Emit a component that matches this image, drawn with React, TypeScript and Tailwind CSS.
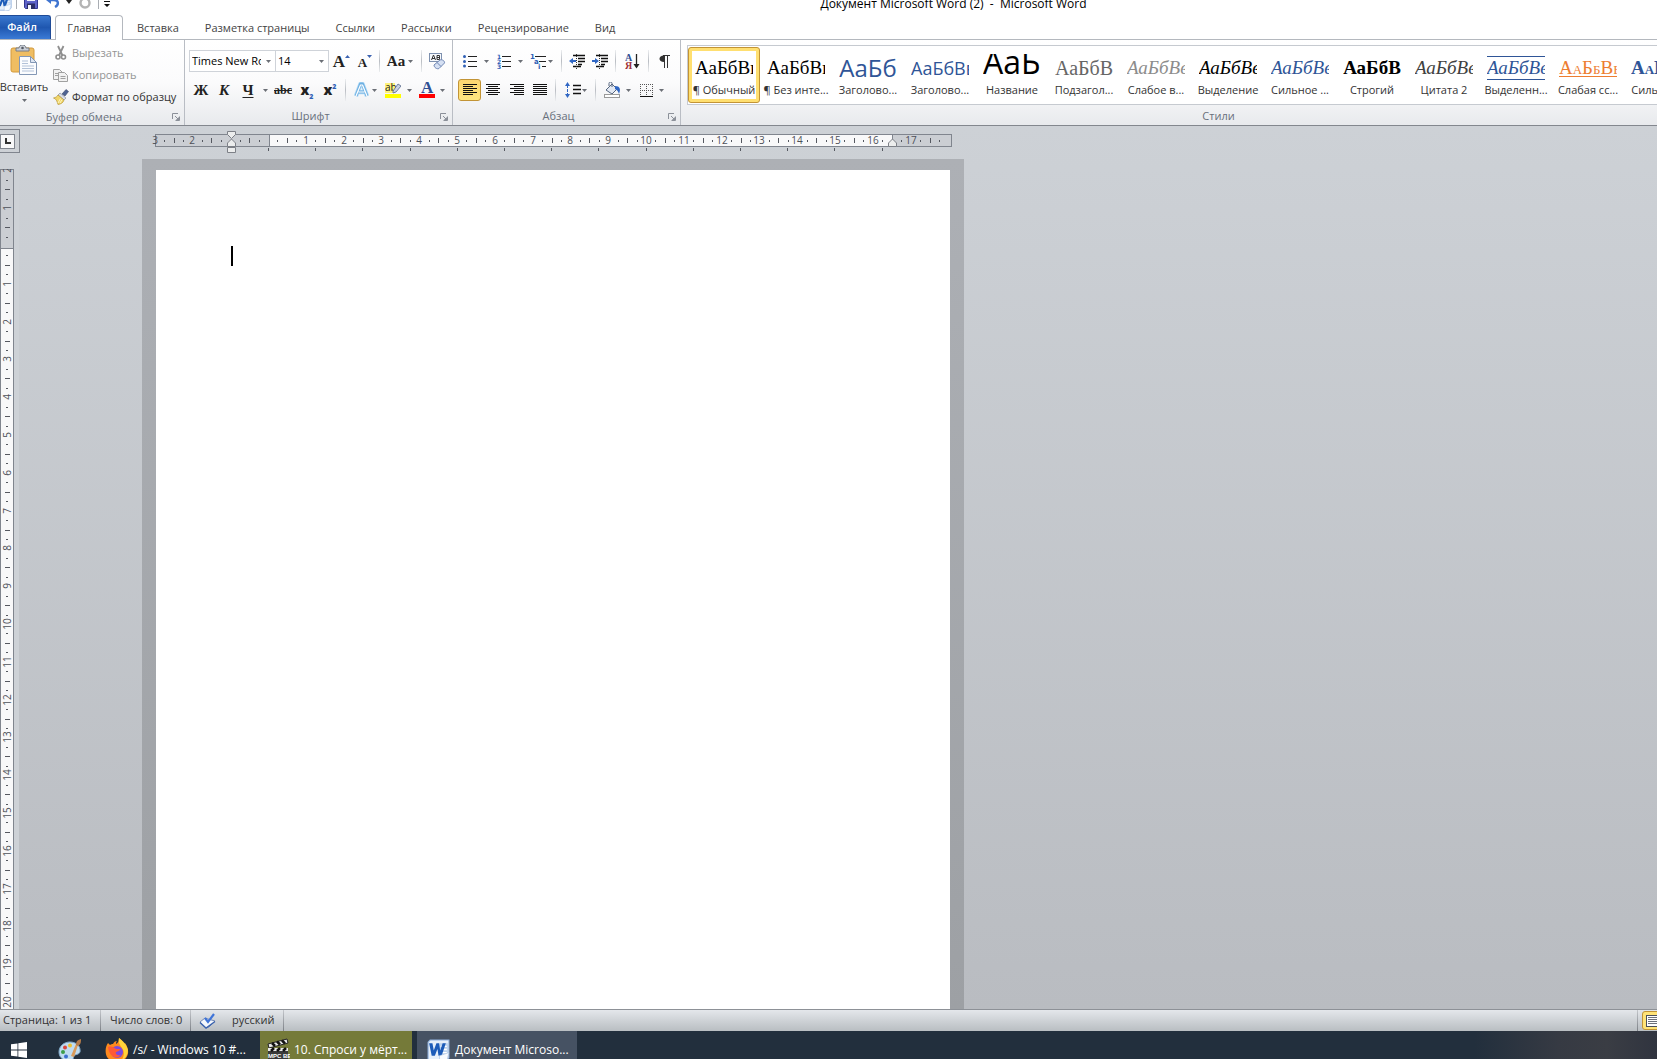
import type { ReactNode } from "react"
import { clsx } from "clsx"

const CM = 37.8

const tabs = ["Вставка", "Разметка страницы", "Ссылки", "Рассылки", "Рецензирование", "Вид"]

const serif = "font-['Liberation_Serif',serif] leading-[22px]"
const sans = "font-['Open_Sans',sans-serif] leading-[22px]"

const styles = [
  { name: "¶ Обычный", sample: "АаБбВв", font: serif, look: "text-[19px] text-black" },
  { name: "¶ Без инте...", sample: "АаБбВв", font: serif, look: "text-[19px] text-black" },
  { name: "Заголово...", sample: "АаБб", font: sans, look: "text-[24px] text-[#2f5597]" },
  { name: "Заголово...", sample: "АаБбВв", font: sans, look: "text-[18px] text-[#2f5597]" },
  {
    name: "Название",
    sample: "АаБбВ",
    font: "font-['Open_Sans',sans-serif] leading-[16px]",
    look: "self-start text-[32px] text-black",
  },
  { name: "Подзагол...", sample: "АаБбВ", font: serif, look: "text-[20px] text-[#666666]" },
  { name: "Слабое в...", sample: "АаБбВв", font: serif, look: "text-[19px] italic text-[#8c8c8c]" },
  { name: "Выделение", sample: "АаБбВв", font: serif, look: "text-[19px] italic text-black" },
  { name: "Сильное ...", sample: "АаБбВв", font: serif, look: "text-[19px] italic text-[#2f5597]" },
  { name: "Строгий", sample: "АаБбВ", font: serif, look: "text-[19px] font-bold text-black" },
  { name: "Цитата 2", sample: "АаБбВв", font: serif, look: "text-[19px] italic text-[#404040]" },
  { name: "Выделенн...", sample: "АаБбВв", font: serif, look: "text-[19px] italic text-[#2f5597] border-y border-[#2f5597]" },
  { name: "Слабая сс...", sample: "АаБбВв", font: serif, look: "text-[19px] text-[#ed7d31] underline underline-offset-2 [font-variant:small-caps]" },
  { name: "Сильная ...", sample: "АаБбВв", font: serif, look: "text-[19px] font-bold text-[#2f5597] [font-variant:small-caps]" },
]

const Caret = () => (
  <svg width="5" height="3" className="shrink-0">
    <path d="M0 0h5L2.500 3z" fill="#6b6f76" />
  </svg>
)

const Separator = ({ className }: { className: string }) => (
  <span className={clsx("flex justify-center self-stretch", className)}>
    <span className="w-px bg-gradient-to-b from-[#eceef0] via-[#b9bdc3] to-[#eceef0]" />
  </span>
)

type ToolProps = { label: string; className: string; children: ReactNode; active?: boolean }

const Tool = ({ label, className, children, active }: ToolProps) => (
  <button
    type="button"
    aria-label={label}
    title={label}
    className={clsx(
      "flex h-[22px] shrink-0 items-center justify-center leading-none",
      className,
      active && "rounded-[3px] border border-[#c29436] bg-gradient-to-b from-[#fcd671] to-[#ffe680]",
    )}
  >
    {children}
  </button>
)

const Launcher = ({ label }: { label: string }) => (
  <button type="button" aria-label={label} className="flex h-4 w-4 items-center justify-center">
    <svg width="8" height="8" fill="none" stroke="#8b9099">
      <path d="M.5 6V.5H6M3 3l3 3M7.500 3.500v4h-4" />
      <path d="M7 4.500v2.500H4.500z" fill="#8b9099" />
    </svg>
  </button>
)

type GroupProps = { title: string; className: string; children: ReactNode; launcher?: boolean }

const Group = ({ title, className, children, launcher = true }: GroupProps) => (
  <section
    aria-label={title}
    className={clsx("flex h-full shrink-0 flex-col border-r border-[#b9bdc4]", className)}
  >
    <div className="h-[68px]">{children}</div>
    <div className="flex h-[18px] items-center pt-px">
      <span className="flex-1 text-center text-[#69707c]">{title}</span>
      {launcher && <Launcher label={`Параметры: ${title}`} />}
    </div>
  </section>
)

const Select = ({ label, value, className }: { label: string; value: string; className: string }) => (
  <label className={clsx("flex h-[22px] shrink-0 items-center border border-[#cfd3d9] bg-white", className)}>
    <span className="sr-only">{label}</span>
    <select
      defaultValue={value}
      className="w-0 flex-1 appearance-none overflow-hidden bg-transparent pl-[2px] text-black outline-none"
    >
      <option>{value}</option>
    </select>
    <span className="flex w-[14px] justify-center">
      <Caret />
    </span>
  </label>
)

const WordIcon = ({ size }: { size: number }) => (
  <svg width={size} height={size} viewBox="0 0 22 22" className="shrink-0">
    <path d="M3 1h18v17l-3 3H1V3z" fill="#e6effa" stroke="#8fb0dc" />
    <path d="M12 4h8v13h-8z" fill="#bcd3ef" />
    <path d="M13 7h6M13 10h6M13 13h6" stroke="#fff" strokeWidth="1.300" />
    <path d="M2 4h3.200l1.300 7L9 4h2.600l1 7L15 4h3l-4 12h-3l-1-6.500L7.500 16h-3z" fill="#1c5bb8" />
    <path d="M12 16l9-3-2 8-7 1z" fill="#f7fafe" stroke="#a8c0e0" strokeWidth=".6" />
  </svg>
)

const QuickAccess = () => (
  <div className="flex h-[22px] w-[115px] shrink-0 items-center overflow-hidden">
    <span className="-ml-[5px] flex w-[17px]"><WordIcon size={17} /></span>
    <span className="ml-[4px] h-[14px] w-px bg-[#a9adb3]" />
    <button type="button" aria-label="Сохранить" className="ml-[7px]">
      <svg width="14" height="14" viewBox="0 0 14 14">
        <path d="M.5.5h13v13h-12l-1-1z" fill="#5d62c8" stroke="#31358f" />
        <path d="M3 0h8v6H3z" fill="#eef1fb" />
        <path d="M3 8.500h8V14H3z" fill="#2a2d66" />
        <path d="M4 10h3v4H4z" fill="#f3f4fa" />
      </svg>
    </button>
    <button type="button" aria-label="Отменить" className="ml-[8px] flex items-center gap-[6px]">
      <svg width="14" height="14" viewBox="0 0 14 14" fill="none">
        <path d="M3 5h5c5 0 5 5 1 7" stroke="#3f74d0" strokeWidth="2.400" />
        <path d="M0 5l5-4v8z" fill="#3f74d0" />
      </svg>
      <svg width="6" height="4"><path d="M0 0h6L3 4z" fill="#222" /></svg>
    </button>
    <button type="button" aria-label="Повторить" className="ml-[6px]">
      <svg width="14" height="14" viewBox="0 0 14 14" fill="none">
        <circle cx="7" cy="8" r="4.500" stroke="#b4b4b4" strokeWidth="2.400" />
        <path d="M7 2l5 0v5z" fill="#b4b4b4" />
      </svg>
    </button>
    <span className="ml-[6px] h-[14px] w-px bg-[#a9adb3]" />
    <button type="button" aria-label="Настройка панели быстрого доступа" className="ml-[5px] pt-[3px]">
      <svg width="6" height="6"><path d="M0 0h6v1H0zM0 3h6L3 6z" fill="#111" /></svg>
    </button>
  </div>
)

const PasteIcon = () => (
  <svg width="28" height="31" viewBox="0 0 28 31">
    <rect x="1" y="3" width="23" height="24" rx="2" fill="#efbd62" stroke="#d39a3c" />
    <path d="M6 6V3h3c0-4 7-4 7 0h3v3z" fill="#c9ced6" stroke="#767d88" />
    <circle cx="12.500" cy="3" r="1.300" fill="#555c66" />
    <path d="M9.500 11.500h11l6 6v12h-17z" fill="#fbfcfe" stroke="#8397b5" />
    <path d="M20.500 11.500v6h6z" fill="#dce5f2" stroke="#8397b5" />
    <path d="M12 16h6M12 18.500h6M12 21h12M12 23.500h12M12 26h12" stroke="#b3c2d8" />
  </svg>
)

const clipRow = "flex h-[22px] items-center whitespace-nowrap"

const Clipboard = () => (
  <Group title="Буфер обмена" className="w-[185px]">
    <div className="flex">
      <button type="button" className="flex w-[48px] shrink-0 flex-col items-center pt-[5px] text-[#333]">
        <PasteIcon />
        <span className="mt-[2px] leading-[18px]">Вставить</span>
        <span className="flex h-[8px] items-center"><Caret /></span>
      </button>
      <div className="flex flex-col pt-[2px] pl-[5px]">
        <button type="button" disabled className={clsx(clipRow, "gap-[3px] text-[#949494]")}>
          <svg width="16" height="16" viewBox="0 0 16 16" fill="none" stroke="#8f8f8f">
            <path d="M5 1l4.500 9.500M10.500 1L6 10.500" strokeWidth="1.800" />
            <circle cx="5" cy="12" r="2" strokeWidth="1.600" />
            <circle cx="10.500" cy="12" r="2" strokeWidth="1.600" />
          </svg>
          Вырезать
        </button>
        <button type="button" disabled className={clsx(clipRow, "gap-[3px] text-[#949494]")}>
          <svg width="16" height="16" viewBox="0 0 16 16" fill="#f2f2f2" stroke="#a0a0a0">
            <path d="M.5 2.500h6l3 3v7h-9z" />
            <path d="M5.500 5.500h6l3 3v6h-9z" />
            <path d="M2 6.500h3M2 8.500h3M7.500 9.500h5M7.500 11.500h5" />
          </svg>
          Копировать
        </button>
        <button type="button" className={clsx(clipRow, "gap-[3px] text-[#333]")}>
          <svg width="16" height="16" viewBox="0 0 16 16">
            <path d="M9 5l4-4.500 2.500 2L12 7z" fill="#4e6392" stroke="#39466b" strokeWidth=".6" />
            <path d="M7 4l6 5-2 2-6-5z" fill="#d9dde6" stroke="#7d8596" strokeWidth=".6" />
            <path d="M5 6l6 5c-1 3-3 4-6 4.500C4 12 3 9.500.5 9 3 8.500 4 7.500 5 6z" fill="#f1d66a" stroke="#b6963a" strokeWidth=".7" />
            <path d="M5 14l2.500-4.500M7 14l2-3.500" stroke="#fff6c2" />
          </svg>
          Формат по образцу
        </button>
      </div>
    </div>
  </Group>
)

const serifTool = "font-['Liberation_Serif',serif] font-bold text-[#222]"

const FontGroup = () => (
  <Group title="Шрифт" className="w-[268px]">
    <div className="flex flex-col gap-[7px] pt-[10px] pl-[4px]">
      <div className="flex items-center">
        <Select label="Шрифт" value="Times New Roman" className="w-[87px]" />
        <Select label="Размер шрифта" value="14" className="-ml-px w-[54px]" />
        <Tool label="Увеличить размер" className={clsx("w-[25px] text-[17px]", serifTool)}>
          A<svg width="5" height="14"><path d="M0 4h5L2.500 1z" fill="#3b62b0" /></svg>
        </Tool>
        <Tool label="Уменьшить размер" className={clsx("w-[22px] pt-[2px] text-[13px]", serifTool)}>
          A<svg width="5" height="16"><path d="M0 1h5L2.500 4z" fill="#3b62b0" /></svg>
        </Tool>
        <Separator className="w-[7px]" />
        <Tool label="Регистр" className={clsx("w-[34px] gap-[3px] text-[15px]", serifTool)}>
          Aa
          <Caret />
        </Tool>
        <Separator className="w-[8px]" />
        <Tool label="Очистить формат" className="w-[24px]">
          <svg width="17" height="17" viewBox="0 0 17 17" fill="none">
            <rect x=".5" y=".5" width="12" height="8" fill="#f5f8fc" stroke="#7d90ae" />
            <path d="M2.500 7l2-5 2 5M3 5.500h3M8 2.500h2.500v4H8zM8 4.500h2" stroke="#333" />
            <path d="M5 12l6-5c2-1 5 1 4.500 3L10 15.500c-2 1-5-1-5-3.500z" fill="#d5e0f3" stroke="#6f86b3" />
            <path d="M8 9.500l4 4" stroke="#6f86b3" />
          </svg>
        </Tool>
      </div>
      <div className="flex items-center">
        <Tool label="Полужирный" className={clsx("w-[24px] text-[15px]", serifTool)}>Ж</Tool>
        <Tool label="Курсив" className={clsx("w-[22px] text-[15px] italic", serifTool)}>К</Tool>
        <Tool label="Подчеркнутый" className={clsx("w-[35px] gap-[9px] pl-[5px] text-[15px]", serifTool)}>
          <span className="underline underline-offset-2">Ч</span>
          <Caret />
        </Tool>
        <Tool label="Зачеркнутый" className={clsx("w-[26px] text-[12px] line-through", serifTool)}>abc</Tool>
        <Tool label="Подстрочный знак" className="w-[22px] text-[14px] font-extrabold text-[#222]">
          x<span className="self-end pb-px text-[7px] text-[#2f5fb5]">2</span>
        </Tool>
        <Tool label="Надстрочный знак" className="w-[24px] text-[14px] font-extrabold text-[#222]">
          x<span className="self-start pt-[4px] text-[7px] text-[#2f5fb5]">2</span>
        </Tool>
        <Separator className="w-[7px]" />
        <Tool label="Текстовые эффекты" className="w-[33px] gap-[3px]">
          <svg width="15" height="16" viewBox="0 0 15 16" fill="none" strokeLinejoin="round">
            <path d="M2 14L6.500 2h2L13 14M4 10h7" stroke="#b5dbf6" strokeWidth="4.500" />
            <path d="M2 14L6.500 2h2L13 14M4.500 10h6" stroke="#6eb0e2" strokeWidth="3" />
            <path d="M2 14L6.500 3h2L13 14M4.500 10h6" stroke="#fff" strokeWidth="1.200" />
          </svg>
          <Caret />
        </Tool>
        <Tool label="Цвет выделения текста" className="w-[33px] gap-[6px]">
          <svg width="16" height="16" viewBox="0 0 16 16">
            <rect width="10" height="10" y="1" fill="#fff27a" />
            <text x="0" y="9" fontSize="10" fontFamily="Open Sans" fill="#222">ab</text>
            <path d="M8 9l5-7 3 2-5 6-3 1z" fill="#c8d2e4" stroke="#596a8c" strokeWidth=".8" />
            <rect y="12" width="16" height="4" fill="#ffff00" />
          </svg>
          <Caret />
        </Tool>
        <Tool label="Цвет текста" className="w-[34px] gap-[5px]">
          <svg width="16" height="16" viewBox="0 0 16 16">
            <text x="2" y="11" fontSize="17" fontWeight="bold" fontFamily="Liberation Serif" fill="#2f4f93">A</text>
            <rect y="12" width="16" height="4" fill="#ff0000" />
          </svg>
          <Caret />
        </Tool>
      </div>
    </div>
  </Group>
)

const Lines = ({ d }: { d: string }) => (
  <svg width="14" height="12" viewBox="0 0 14 12" shapeRendering="crispEdges">
    <path d={d} stroke="#111" />
  </svg>
)

const IndentIcon = ({ out }: { out?: boolean }) => (
  <svg width="17" height="15" viewBox="0 0 17 15">
    <path d="M4 1.500h12M9 4.500h7M9 7.500h7M9 10.500h4M4 12.500h8" stroke="#111" strokeWidth="1.400" />
    <path d="M7.500 0v15" stroke="#333" strokeDasharray="1 1" />
    <path d={out ? "M0 7l4-3v2h3v2H4v2z" : "M7 7L3 4v2H0v2h3v2z"} fill="#2f66c4" />
  </svg>
)

const Paragraph = () => (
  <Group title="Абзац" className="w-[228px]">
    <div className="flex flex-col gap-[7px] pt-[10px] pl-[5px]">
      <div className="flex items-center">
        <Tool label="Маркеры" className="w-[35px] gap-[7px]">
          <svg width="14" height="14" viewBox="0 0 14 14">
            <path d="M5 2.500h9M5 7.500h9M5 12.500h9" stroke="#222" />
            <circle cx="1.500" cy="2.500" r="1.500" fill="#2f5fb5" />
            <circle cx="1.500" cy="7.500" r="1.500" fill="#2f5fb5" />
            <circle cx="1.500" cy="12" r="1.500" fill="#2f5fb5" />
          </svg>
          <Caret />
        </Tool>
        <Tool label="Нумерация" className="w-[34px] gap-[7px]">
          <svg width="14" height="15" viewBox="0 0 14 15">
            <path d="M5 2.500h9M5 7.500h9M5 12.500h9" stroke="#222" />
            <g fill="#2f5fb5" fontSize="6" fontWeight="bold" fontFamily="DejaVu Sans">
              <text y="5">1</text><text y="10">2</text><text y="15">3</text>
            </g>
          </svg>
          <Caret />
        </Tool>
        <Tool label="Многоуровневый список" className="w-[29px] gap-[2px]">
          <svg width="16" height="15" viewBox="0 0 16 15">
            <path d="M5 2.500h11M9 7.500h7M12 12.500h4" stroke="#222" />
            <g fill="#2f5fb5" fontSize="7" fontWeight="bold" fontFamily="DejaVu Sans">
              <text y="5">1</text><text x="4" y="10">a</text><text x="8" y="15">i</text>
            </g>
          </svg>
          <Caret />
        </Tool>
        <Separator className="w-[10px]" />
        <Tool label="Уменьшить отступ" className="w-[23px]"><IndentIcon out /></Tool>
        <Tool label="Увеличить отступ" className="w-[22px]"><IndentIcon /></Tool>
        <Separator className="w-[9px]" />
        <Tool label="Сортировка" className="w-[24px]">
          <svg width="15" height="17" viewBox="0 0 15 17">
            <g fontSize="10" fontWeight="bold" fontFamily="Liberation Serif">
              <text y="8" fill="#2f4f93">А</text><text y="16" fill="#a03038">Я</text>
            </g>
            <path d="M11.500 1v13" stroke="#222" strokeWidth="1.300" />
            <path d="M8.500 11h6l-3 4.500z" fill="#222" />
          </svg>
        </Tool>
        <Separator className="w-[9px]" />
        <Tool label="Отобразить все знаки" className="w-[22px]">
          <svg width="11" height="13" viewBox="0 0 11 13" fill="none">
            <path d="M5 7C-1 7-1 .5 5 .5z" fill="#333" />
            <path d="M4 .5h7M5.500 0v13M8.500 0v13" stroke="#333" />
          </svg>
        </Tool>
      </div>
      <div className="flex items-center">
        <Tool label="По левому краю" className="w-[23px]" active>
          <Lines d="M0 .5h14M0 2.500h10M0 4.500h14M0 6.500h10M0 8.500h14M0 10.500h10" />
        </Tool>
        <Tool label="По центру" className="w-[24px]">
          <Lines d="M0 .5h14M2 2.500h10M0 4.500h14M2 6.500h10M0 8.500h14M2 10.500h10" />
        </Tool>
        <Tool label="По правому краю" className="w-[24px]">
          <Lines d="M0 .5h14M4 2.500h10M0 4.500h14M4 6.500h10M0 8.500h14M4 10.500h10" />
        </Tool>
        <Tool label="По ширине" className="w-[22px]">
          <Lines d="M0 .5h14M0 2.500h14M0 4.500h14M0 6.500h14M0 8.500h14M0 10.500h14" />
        </Tool>
        <Separator className="w-[9px]" />
        <Tool label="Интервал" className="w-[31px] gap-px">
          <svg width="16" height="16" viewBox="0 0 16 16">
            <path d="M8 3.500h8M8 7.500h8M8 11.500h8" stroke="#111" strokeWidth="1.300" />
            <path d="M0 4l2.500-4L5 4zM0 12l2.500 4L5 12z" fill="#2f66c4" />
            <path d="M2.500 3v10" stroke="#2f66c4" strokeDasharray="3 1" />
          </svg>
          <Caret />
        </Tool>
        <Separator className="w-[9px]" />
        <Tool label="Заливка" className="w-[35px] gap-[5px]">
          <svg width="17" height="16" viewBox="0 0 17 16">
            <path d="M2 8l6-6 5 5-5 5z" fill="#e3e9f3" stroke="#55657f" />
            <path d="M8 5V1.500c0-2-3-2-3 0V4" fill="none" stroke="#55657f" />
            <path d="M11 4c5 0 6 3 4 8-1-3-2-4-4-5z" fill="#2f66c4" />
            <rect x=".5" y="12.500" width="15" height="3" fill="#fff" stroke="#9a9a9a" />
          </svg>
          <Caret />
        </Tool>
        <Tool label="Границы" className="w-[34px] gap-[6px]">
          <svg width="13" height="13" viewBox="0 0 13 13" shapeRendering="crispEdges">
            <path d="M0 .5h13M0 6.500h13M.5 0v11M6.500 0v11M12.500 0v11" stroke="#555" strokeDasharray="1 1" />
            <path d="M0 12.500h13" stroke="#111" />
          </svg>
          <Caret />
        </Tool>
      </div>
    </div>
  </Group>
)

const Gallery = () => (
  <Group title="Стили" className="w-[1076px]" launcher={false}>
    <div className="pt-[5px] pl-[6px]">
      <div className="flex h-[60px] items-center border border-[#c6cad0] bg-white">
        {styles.map((style, index) => (
          <button
            key={index}
            type="button"
            className={clsx(
              "flex h-[56px] w-[72px] shrink-0 flex-col items-center justify-between rounded-[3px] border p-[3px]",
              index === 0 ? "border-[#c29436] bg-[#ffdf70]" : "border-transparent",
            )}
          >
            <span className="flex h-[48px] w-[64px] flex-col items-center bg-white pt-[3px]">
              <span className="flex h-[27px] w-[58px] shrink-0 items-center overflow-hidden">
                <span className={clsx("w-full whitespace-nowrap", style.font, style.look)}>{style.sample}</span>
              </span>
              <span className="leading-[18px] whitespace-nowrap text-[#333]">{style.name}</span>
            </span>
          </button>
        ))}
      </div>
    </div>
  </Group>
)

// Positions are counted in quarters of a centimetre from the margin
const marks = (from: number, to: number, skip: number[] = []) =>
  Array.from({ length: to - from + 1 }, (_, i) => from + i).filter((k) => k !== 0 && !skip.includes(k))

const HorizontalRuler = () => (
  <svg width="797" height="24" className="overflow-visible" fontFamily="Open Sans" fontSize="10">
    <g shapeRendering="crispEdges">
      <rect x=".5" y="3.500" width="796" height="12" fill="#cbced3" stroke="#80858e" />
      <rect x="114" y="4" width="623" height="11" fill="#f8f8f9" />
      <path d="M114.500 3v12M737.500 3v12" stroke="#80858e" />
      {marks(-11, 71, [-4, 66])
        .filter((k) => k % 4 !== 0)
        .map((k) => {
          const x = Math.round(113 + (k * CM) / 4)
          const half = k % 2 === 0
          return <rect key={k} x={x} y={half ? 7 : 9} width="1" height={half ? 5 : 2} fill="#555860" />
        })}
      {Array.from({ length: 14 }, (_, i) => (
        <rect key={i} x={Math.round(113 + i * 47.2)} y="17" width="1" height="3" fill="#555860" />
      ))}
    </g>
    {marks(-12, 71, [-4])
      .filter((k) => k % 4 === 0)
      .map((k) => (
        <text key={k} x={Math.round(113 + (k * CM) / 4)} y="13" textAnchor="middle" fill="#4d5058">
          {Math.abs(k / 4)}
        </text>
      ))}
    <g fill="#eceded" stroke="#7d8087">
      <path d="M72.500.5h8v3l-4 4-4-4zM76.500 8l4 4v3.500h-8V12zM72.500 16.500h8v5h-8z" />
      <path d="M737.500 8l4 4v3.500h-8V12z" />
    </g>
  </svg>
)

const VerticalRuler = () => (
  <svg width="14" className="h-full" fontFamily="Open Sans" fontSize="10">
    <g shapeRendering="crispEdges">
      <rect width="14" height="100%" fill="#f8f8f9" />
      <rect width="14" height="79" fill="#cbced3" />
      <path d="M0 .5h14M0 79.500h14" stroke="#80858e" />
      <path d="M.5 0v2000M13.500 0v2000" stroke="#80858e" />
      {marks(-7, 120)
        .filter((k) => k % 4 !== 0)
        .map((k) => {
          const y = Math.round(77 + (k * CM) / 4)
          const half = k % 2 === 0
          return <rect key={k} x={half ? 5 : 6} y={y} width={half ? 5 : 2} height="1" fill="#555860" />
        })}
    </g>
    {marks(-8, 120)
      .filter((k) => k % 4 === 0)
      .map((k) => (
        <text
          key={k}
          transform={`translate(11 ${Math.round(77 + (k * CM) / 4)}) rotate(-90)`}
          textAnchor="middle"
          fill="#4d5058"
        >
          {Math.abs(k / 4)}
        </text>
      ))}
  </svg>
)

const StatusDivider = () => <span className="h-full w-px bg-gradient-to-b from-[#c3c6cb] to-[#7d8187]" />

const StatusBar = () => (
  <footer className="flex h-[22px] shrink-0 items-center border-t border-[#8d9197] bg-gradient-to-b from-[#e4e7eb] to-[#b9bec2] text-[#333]">
    <button type="button" className="w-[100px] pl-[3px] text-left whitespace-nowrap">Страница: 1 из 1</button>
    <StatusDivider />
    <button type="button" className="w-[89px] pl-[9px] text-left whitespace-nowrap">Число слов: 0</button>
    <StatusDivider />
    <button type="button" aria-label="Правописание" className="flex w-[33px] justify-center">
      <svg width="18" height="16" viewBox="0 0 18 16">
        <path d="M1 9l5-4 3 1 7 2-6 6-3 1z" fill="#f4f7fc" stroke="#7188b5" />
        <path d="M1 9.500l6 5.500 9-6.500" fill="none" stroke="#3b63ae" strokeWidth="1.400" />
        <path d="M6 5l3 4 6-8" fill="none" stroke="#3f74d8" strokeWidth="2.200" />
      </svg>
    </button>
    <button type="button" className="w-[59px] pl-[8px] text-left">русский</button>
    <StatusDivider />
    <span className="flex-1" />
    <StatusDivider />
    <button
      type="button"
      aria-label="Разметка страницы"
      className="-mr-[8px] ml-[4px] flex h-[19px] w-[23px] items-center rounded-[3px] border border-[#c29436] bg-[#ffe377] pl-[3px]"
    >
      <svg width="14" height="12" viewBox="0 0 14 12" shapeRendering="crispEdges">
        <rect x=".5" y=".5" width="13" height="11" fill="#fff" stroke="#4b4f58" />
        <path d="M2 2.500h10M2 4.500h10M2 6.500h10M2 8.500h10" stroke="#6c717b" />
      </svg>
    </button>
  </footer>
)

const Taskbar = () => (
  <nav className="h-[28px] shrink-0 overflow-hidden bg-[linear-gradient(90deg,#222f3d_0%,#222f3d_89%,#363a43_94%,#3a3d44_97%,#30343f_100%)] text-[12px] text-white">
    <div className="flex h-[38px] items-stretch">
      <button type="button" aria-label="Пуск" className="flex w-[38px] items-center justify-center">
        <svg width="16" height="16" viewBox="0 0 16 16" fill="#fff">
          <path d="M0 2.300L6.500 1.400v6.200H0zM7.300 1.300L16 0v7.600H7.300zM0 8.400h6.500v6.200L0 13.700zM7.300 8.400H16V16l-8.700-1.300z" />
        </svg>
      </button>
      <button type="button" aria-label="Paint" className="flex w-[64px] items-center justify-center">
        <svg width="25" height="25" viewBox="0 0 25 25">
          <path d="M12 4c6 0 11 4 10 10-1 3-5 2-6 4s0 4-4 5C6 23 1 20 1 14S6 4 12 4z" fill="#bfdcf0" stroke="#7ea6c6" />
          <circle cx="5" cy="14" r="2" fill="#3c9e4b" /><circle cx="7" cy="9.500" r="2" fill="#d9463b" />
          <circle cx="12" cy="7.500" r="2" fill="#efc331" /><circle cx="8" cy="18.500" r="2" fill="#3b6fd1" />
          <path d="M13 18l5-12 2 1-4 12z" fill="#d99b5b" />
          <path d="M18 7c0-3 1-5 5-6 0 3 0 5-3 7z" fill="#b47a48" />
        </svg>
      </button>
      <button type="button" className="flex w-[158px] items-center gap-[4px] pl-[3px] whitespace-nowrap">
        <svg width="24" height="24" viewBox="0 0 24 24" className="shrink-0">
          <path d="M3 5l2 2c1-1 2-1 3-1 1-2 2-3 4-3-1 1-1 2-1 3 2-1 3-3 3-6 3 2 4 4 5 6l1-1c4 6 4 11 1 15-5 6-15 5-19-1C0 15 0 9 3 5z" fill="#ff8a1e" />
          <path d="M14 0c4 3 8 7 9 12 0 5-3 9-7 11 3-4 4-9 1-13-2-3-4-5-3-10z" fill="#ffd43a" />
          <circle cx="12" cy="14" r="6" fill="#7a4be0" />
          <path d="M3 9c3-1 6 0 8 2h4c0 2-2 2-4 3-1 2 1 4 5 3-4 5-12 2-13-8z" fill="#ff5a36" />
        </svg>
        /s/ - Windows 10 #...
      </button>
      <button type="button" className="flex w-[152px] items-center gap-[4px] bg-[#757a39] pl-[6px] whitespace-nowrap">
        <svg width="24" height="24" viewBox="0 0 24 24" className="shrink-0">
          <path d="M2 6l19-5 1 4L3 10z" fill="#e9e9e9" stroke="#222" />
          <path d="M6 5l3 3M11 3.500l3 3M16 2.500l3 3" stroke="#111" strokeWidth="2.500" />
          <path d="M2 10h20v14H2z" fill="#3a3a3a" />
          <path d="M2 10h20v3H2z" fill="#e9e9e9" />
          <path d="M5 13l3-3M11 13l3-3M17 13l3-3" stroke="#111" strokeWidth="2.500" />
          <text x="2" y="20" fontSize="6" fontWeight="bold" fontFamily="Liberation Sans" fill="#fff">MPC BE</text>
        </svg>
        10. Спроси у мёрт...
      </button>
      <button type="button" className="ml-[5px] flex w-[160px] items-center gap-[5px] bg-[#465263] pl-[10px] whitespace-nowrap">
        <WordIcon size={23} />
        Документ Microso...
      </button>
    </div>
  </nav>
)

const App = () => {
  return (
    <div className="flex h-screen flex-col overflow-hidden bg-white font-['Open_Sans','Noto_Sans',sans-serif] text-[11px]">
      <header className="flex h-[13px] shrink-0 items-end overflow-hidden">
        <QuickAccess />
        <h1 className="flex-1 pl-[135px] text-center text-[12px] leading-[18px] whitespace-pre text-black">
          {"Документ Microsoft Word (2)  -  Microsoft Word"}
        </h1>
      </header>

      <nav className="flex h-[27px] shrink-0 items-end border-b border-[#b4b8be] text-[#444]">
        <button
          type="button"
          className="mr-[4px] h-[24px] w-[51px] rounded-tr-[3px] border-t border-r border-[#1f4b97] bg-gradient-to-b from-[#3a78cf] via-[#1f57b0] to-[#3b7bd6] pr-[6px] font-semibold text-white"
        >
          Файл
        </button>
        <button
          type="button"
          className="mr-px -mb-px h-[25px] w-[68px] rounded-t-[4px] border border-b-0 border-[#b4b8be] bg-white pt-px"
        >
          Главная
        </button>
        {tabs.map((tab) => (
          <button key={tab} type="button" className="h-[24px] px-[13px] pt-[2px] whitespace-nowrap">
            {tab}
          </button>
        ))}
      </nav>

      <div className="flex h-[86px] shrink-0 overflow-hidden border-b border-[#83878e] bg-gradient-to-b from-white via-[#fbfbfc] to-[#e8eaed]">
        <Clipboard />
        <FontGroup />
        <Paragraph />
        <Gallery />
      </div>

      <main className="flex min-h-0 flex-1 flex-col bg-gradient-to-b from-[#cdd1d6] to-[#b9bcc1]">
        <div className="flex h-[33px] shrink-0 items-start">
          <div className="mt-[3px] mr-[135px] flex h-[24px] w-[20px] items-center border border-l-0 border-[#80858e]">
            <button
              type="button"
              aria-label="Позиция табуляции"
              className="flex h-[15px] w-[15px] items-center justify-center border border-[#80858e] bg-[#f8f8f9]"
            >
              <svg width="6" height="6"><path d="M1 0v5h5" fill="none" stroke="#333" strokeWidth="2" /></svg>
            </button>
          </div>
          <div className="pt-[5px]">
            <HorizontalRuler />
          </div>
        </div>
        <div className="flex min-h-0 flex-1">
          <div className="w-[19px] shrink-0 overflow-hidden bg-[#cdd1d6] pt-[10px]">
            <VerticalRuler />
          </div>
          <div className="ml-[123px] flex bg-gradient-to-b from-[#adb0b5] to-[#9da0a4] px-[14px] pt-[11px]">
            <article className="w-[794px] bg-white pt-[76px] pl-[75px]" aria-label="Документ">
              <span className="block h-[20px] w-[2px] bg-black" />
            </article>
          </div>
        </div>
      </main>

      <StatusBar />
      <Taskbar />
    </div>
  )
}

export default App
